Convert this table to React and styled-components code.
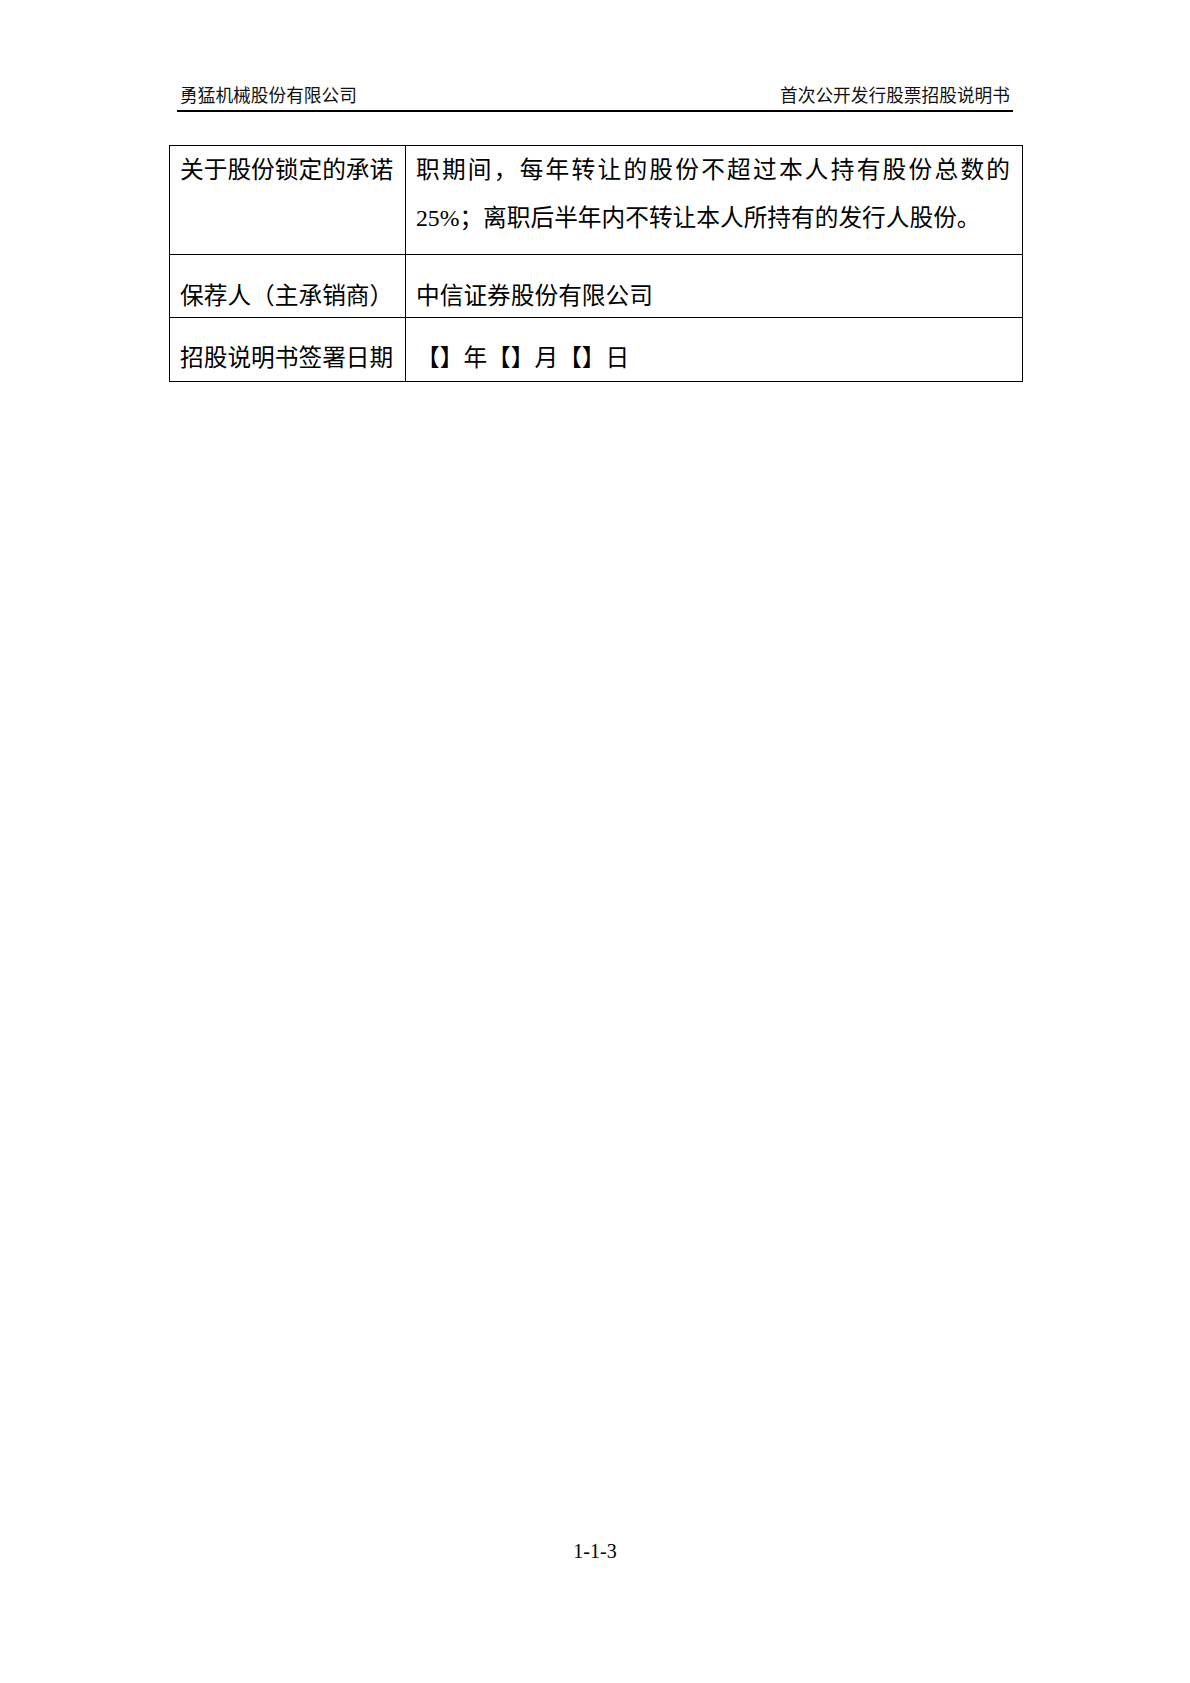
import React from 'react';
import styled, { createGlobalStyle } from 'styled-components';

const GlobalStyle = createGlobalStyle`
  html, body {
    margin: 0;
    padding: 0;
    background: #fff;
  }
  body {
    font-family: "Liberation Serif", "Noto Sans CJK SC", serif;
    color: #000;
    text-spacing-trim: space-all;
  }
`;

const Page = styled.div`
  width: 1190px;
  height: 1683px;
  display: flex;
  flex-direction: column;
  box-sizing: border-box;
  padding-bottom: 120px;
  background: #fff;
`;

const Header = styled.div`
  margin: 0 177px;
  padding: 84px 3px 1px;
  display: flex;
  justify-content: space-between;
  border-bottom: 2px solid #000;
  font-size: 17.7px;
  line-height: 25px;
  color: #111;
`;

const Grid = styled.div`
  margin: 33px 0 0 169px;
  width: 853px;
  display: grid;
  grid-template-columns: 236px 1fr;
  grid-template-rows: ${props => props.rows};
  border-top: 1px solid #000;
  border-left: 1px solid #000;
`;

const Cell = styled.div`
  box-sizing: border-box;
  border-right: 1px solid #000;
  border-bottom: 1px solid #000;
  padding: ${props => props.pad}px 12px 0 10px;
  font-size: 23.7px;
  line-height: 48px;
  white-space: nowrap;
`;

const Line = styled.div`
  text-align: ${props => (props.spread ? 'justify' : 'left')};
  text-align-last: ${props => (props.spread ? 'justify' : 'left')};
`;

const Footer = styled.div`
  margin-top: auto;
  text-align: center;
  font-size: 20px;
  line-height: 24px;
`;

const rows = [
  {
    label: '关于股份锁定的承诺',
    pad: 0,
    lines: [
      { text: '职期间，每年转让的股份不超过本人持有股份总数的', spread: true },
      { text: '25%；离职后半年内不转让本人所持有的发行人股份。' }
    ]
  },
  {
    label: '保荐人（主承销商）',
    pad: 17,
    lines: [{ text: '中信证券股份有限公司' }]
  },
  {
    label: '招股说明书签署日期',
    pad: 16,
    lines: [{ text: '【】年【】月【】日' }]
  }
];

const App = () => (
  <>
    <GlobalStyle />
    <Page>
      <Header>
        <span>勇猛机械股份有限公司</span>
        <span>首次公开发行股票招股说明书</span>
      </Header>
      <Grid rows="109px 63px 64px">
        {rows.map(row => (
          <React.Fragment key={row.label}>
            <Cell pad={row.pad}>{row.label}</Cell>
            <Cell pad={row.pad}>
              {row.lines.map(line => (
                <Line key={line.text} spread={line.spread}>
                  {line.text}
                </Line>
              ))}
            </Cell>
          </React.Fragment>
        ))}
      </Grid>
      <Footer>1-1-3</Footer>
    </Page>
  </>
);

export default App;
